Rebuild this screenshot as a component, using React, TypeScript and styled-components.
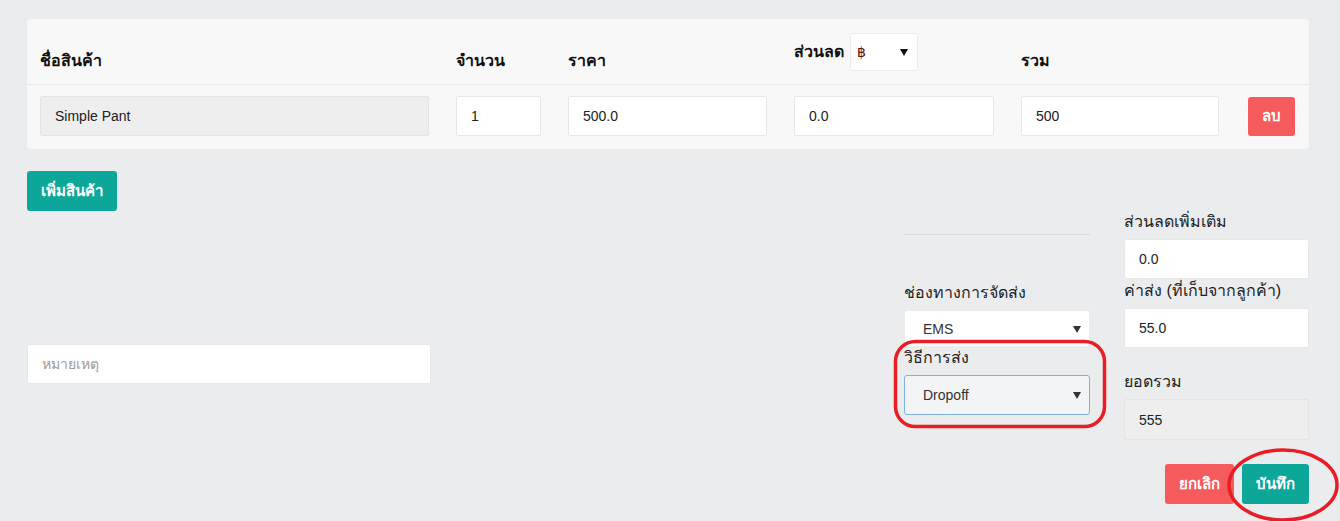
import * as React from "react";
import styled, { createGlobalStyle } from "styled-components";

const GlobalStyle = createGlobalStyle`
  html, body {
    margin: 0;
    padding: 0;
    background: #ebecee;
  }
  body {
    font-family: "Liberation Sans", "Noto Sans", "DejaVu Sans", sans-serif;
    color: #222;
  }
  * {
    box-sizing: border-box;
  }
`;

const Page = styled.div`
  position: relative;
  width: 1340px;
  height: 521px;
  padding: 19px 30px 0 27px;
  overflow: hidden;
`;

const Card = styled.div`
  background: #f8f8f8;
  border-radius: 4px;
  width: 1282px;
`;

const Row = styled.div<{ $head?: boolean }>`
  display: grid;
  grid-template-columns: 389px 85px 199px 200px 198px 1fr;
  column-gap: 27px;
  align-items: ${(p) => (p.$head ? "end" : "center")};
  padding: ${(p) => (p.$head ? "13px 13px 12px" : "11px 13px 13px")};
  height: ${(p) => (p.$head ? "66px" : "64px")};
  border-bottom: ${(p) => (p.$head ? "1px solid #e3e8ee" : "none")};
`;

const Th = styled.div`
  font-size: 16px;
  font-weight: bold;
  line-height: 22px;
  color: #111;
`;

const ThInline = styled(Th)`
  display: flex;
  align-items: center;
  gap: 6px;
  margin-bottom: 1px;
`;

const Input = styled.div<{ $disabled?: boolean; $h?: number }>`
  height: ${(p) => p.$h ?? 40}px;
  display: flex;
  align-items: center;
  padding: 0 14px;
  font-size: 14px;
  color: #222;
  background: ${(p) => (p.$disabled ? "#eeeeee" : "#ffffff")};
  border: 1px solid ${(p) => (p.$disabled ? "#e4e4e4" : "#e6e7ea")};
  border-radius: 2px;
`;

const Placeholder = styled.span`
  color: #9a9a9a;
  font-size: 14px;
`;

const SelectBox = styled.div<{ $focus?: boolean; $h?: number }>`
  position: relative;
  height: ${(p) => p.$h ?? 38}px;
  display: flex;
  align-items: center;
  padding: 0 18px;
  font-size: 14px;
  color: #333;
  background: ${(p) => (p.$focus ? "#f3f4f6" : "#ffffff")};
  border: 1px solid ${(p) => (p.$focus ? "#7eb2e3" : "#ececec")};
  border-radius: 3px;

  &::after {
    content: "";
    position: absolute;
    right: 8px;
    top: 50%;
    margin-top: -3px;
    border-left: 4px solid transparent;
    border-right: 4px solid transparent;
    border-top: 7px solid #333;
  }
`;

const CurrencySelect = styled(SelectBox)`
  width: 68px;
  padding: 0 6px;
  font-weight: normal;
  color: #5a1010;
  font-size: 14px;

  &::after {
    right: 9px;
    border-top-color: #111;
  }
`;

const Button = styled.button<{ $variant: "teal" | "red" }>`
  border: none;
  border-radius: 3px;
  height: 40px;
  padding: 0 14px;
  font-family: inherit;
  font-size: 15px;
  font-weight: bold;
  color: #fff;
  cursor: pointer;
  background: ${(p) => (p.$variant === "teal" ? "#0da79a" : "#f55b5c")};
`;

const DeleteButton = styled(Button)`
  width: 47px;
  height: 39px;
  padding: 0;
  margin-left: 2px;
`;

const AddRow = styled.div`
  margin-top: 22px;
`;

const Bottom = styled.div`
  display: grid;
  grid-template-columns: 404px 1fr 186px 185px;
  column-gap: 34px;
  width: 1282px;
`;

const LeftCol = styled.div`
  padding-top: 133px;
`;

const Col = styled.div`
  display: flex;
  flex-direction: column;
`;

const Label = styled.div<{ $top: number }>`
  margin-top: ${(p) => p.$top}px;
  height: 22px;
  line-height: 22px;
  font-size: 16px;
  color: #222;
  margin-bottom: 6px;
`;

const Rule = styled.div`
  margin-top: 23px;
  height: 1px;
  background: #d8dadd;
`;

const ActionRow = styled.div`
  display: flex;
  justify-content: flex-end;
  gap: 8px;
  margin-top: 24px;
`;

const Annotation = styled.svg`
  position: absolute;
  left: 0;
  top: 0;
  pointer-events: none;
`;

export default function App() {
  return (
    <>
      <GlobalStyle />
      <Page>
        <Card>
          <Row $head>
            <Th>ชื่อสินค้า</Th>
            <Th>จำนวน</Th>
            <Th>ราคา</Th>
            <ThInline>
              ส่วนลด
              <CurrencySelect>฿</CurrencySelect>
            </ThInline>
            <Th>รวม</Th>
            <Th />
          </Row>
          <Row>
            <Input $disabled>Simple Pant</Input>
            <Input>1</Input>
            <Input>500.0</Input>
            <Input>0.0</Input>
            <Input>500</Input>
            <DeleteButton $variant="red">ลบ</DeleteButton>
          </Row>
        </Card>

        <AddRow>
          <Button $variant="teal">เพิ่มสินค้า</Button>
        </AddRow>

        <Bottom>
          <LeftCol>
            <Input>
              <Placeholder>หมายเหตุ</Placeholder>
            </Input>
          </LeftCol>
          <div />
          <Col>
            <Rule />
            <Label $top={47}>ช่องทางการจัดส่ง</Label>
            <SelectBox $h={37}>EMS</SelectBox>
            <Label $top={0}>วิธีการส่ง</Label>
            <SelectBox $focus $h={40}>
              Dropoff
            </SelectBox>
          </Col>
          <Col>
            <Label $top={0}>ส่วนลดเพิ่มเติม</Label>
            <Input>0.0</Input>
            <Label $top={1}>ค่าส่ง (ที่เก็บจากลูกค้า)</Label>
            <Input>55.0</Input>
            <Label $top={23}>ยอดรวม</Label>
            <Input $disabled $h={41}>
              555
            </Input>
            <ActionRow>
              <Button $variant="red">ยกเลิก</Button>
              <Button $variant="teal">บันทึก</Button>
            </ActionRow>
          </Col>
        </Bottom>

        <Annotation width={1340} height={521}>
          <rect
            x={895.5}
            y={341.5}
            width={209}
            height={85}
            rx={20}
            fill="none"
            stroke="#e81d25"
            strokeWidth={3.5}
          />
          <ellipse
            cx={1283}
            cy={485}
            rx={54}
            ry={35}
            fill="none"
            stroke="#e81d25"
            strokeWidth={3.5}
          />
        </Annotation>
      </Page>
    </>
  );
}
